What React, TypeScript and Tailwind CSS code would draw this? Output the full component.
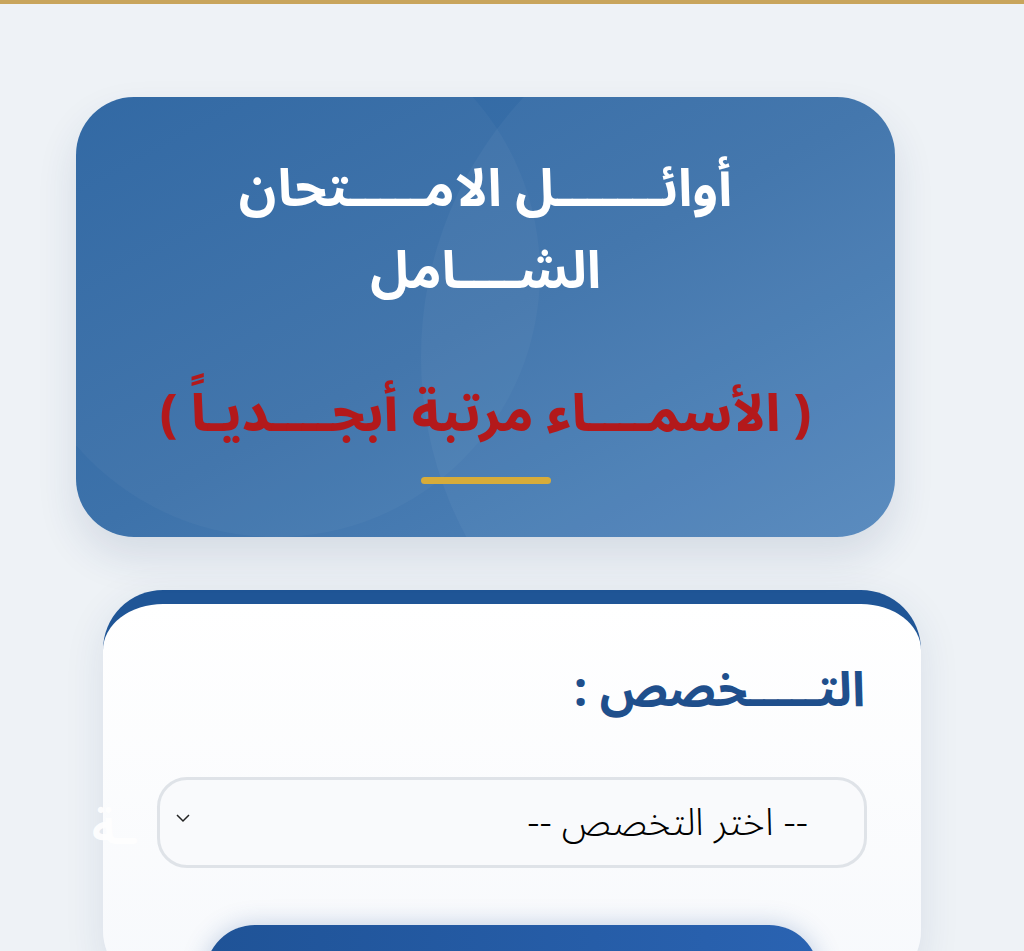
import React from "react";

const arabic = { fontFamily: '"Noto Sans Arabic", "DejaVu Sans", "Noto Sans", sans-serif' };

export default function App() {
  return (
    <div className="min-h-[951px] w-[1024px] overflow-hidden bg-[#eef2f6] relative" dir="rtl" style={arabic}>
      <div className="h-[4px] w-full bg-[#c8a55c]" />
      <div dir="ltr" className="pt-[93px]">
        {/* hero card */}
        <div className="relative ml-[76px] w-[819px] h-[440px] rounded-[58px] overflow-hidden bg-gradient-to-br from-[#2c65a2] via-[#3d72aa] to-[#5588bd] shadow-[0_20px_40px_rgba(30,60,110,0.12)]">
          <div className="absolute left-[-64px] top-[-88px] w-[528px] h-[528px] rounded-full bg-white/[0.03]" />
          <div className="absolute left-[345px] top-[-120px] w-[760px] h-[760px] rounded-full bg-white/[0.035]" />
          <div className="relative flex flex-col items-center pt-[52px]" dir="rtl">
            <div className="text-white font-bold text-[52px] leading-[82px] text-center">
              <div>أوائـــــــل الامـــــتحان</div>
              <div>الشــــامل</div>
            </div>
            <div className="mt-[70px] text-[#b3191b] font-[800] text-[51px] leading-[64px]">( الأسمــــاء مرتبة أبجــــديـاً )</div>
            <div className="mt-[30px] w-[130px] h-[7px] rounded-full bg-[#d7ac3a]" />
          </div>
        </div>

        {/* form card */}
        <div className="mt-[53px] ml-[103px] w-[818px] h-[400px] rounded-[60px] border-t-[14px] border-[#1f5596] bg-gradient-to-b from-white to-[#f7f9fc] shadow-[0_10px_40px_rgba(30,60,110,0.10)] px-[54px]" dir="rtl">
          <div className="pt-[57px] text-[#1f4f8c] font-bold text-[48px] leading-[60px] pr-[2px]">التـــــخصص :</div>
          <div className="mt-[56px] h-[91px] rounded-[30px] border-[3px] border-[#dfe3e8] bg-[#f9fafc] flex items-center justify-between pr-[56px] pl-[16px]">
            <span className="text-black text-[38px] font-light leading-[50px]">-- اختر التخصص --</span>
            <svg width="14" height="9" viewBox="0 0 14 9" className="mb-[8px]">
              <path d="M1 1 L7 7 L13 1" fill="none" stroke="#222" strokeWidth="1.5" />
            </svg>
          </div>
          <div className="mt-[57px] mx-[48px] h-[80px] rounded-t-[50px] bg-gradient-to-l from-[#2a63b2] to-[#1f5397] shadow-[0_0_24px_rgba(30,80,150,0.25)]" />
        </div>
      </div>
      <span className="absolute left-[92px] top-[800px] text-white font-bold text-[44px] leading-[60px] opacity-90">ـة</span>
    </div>
  );
}
